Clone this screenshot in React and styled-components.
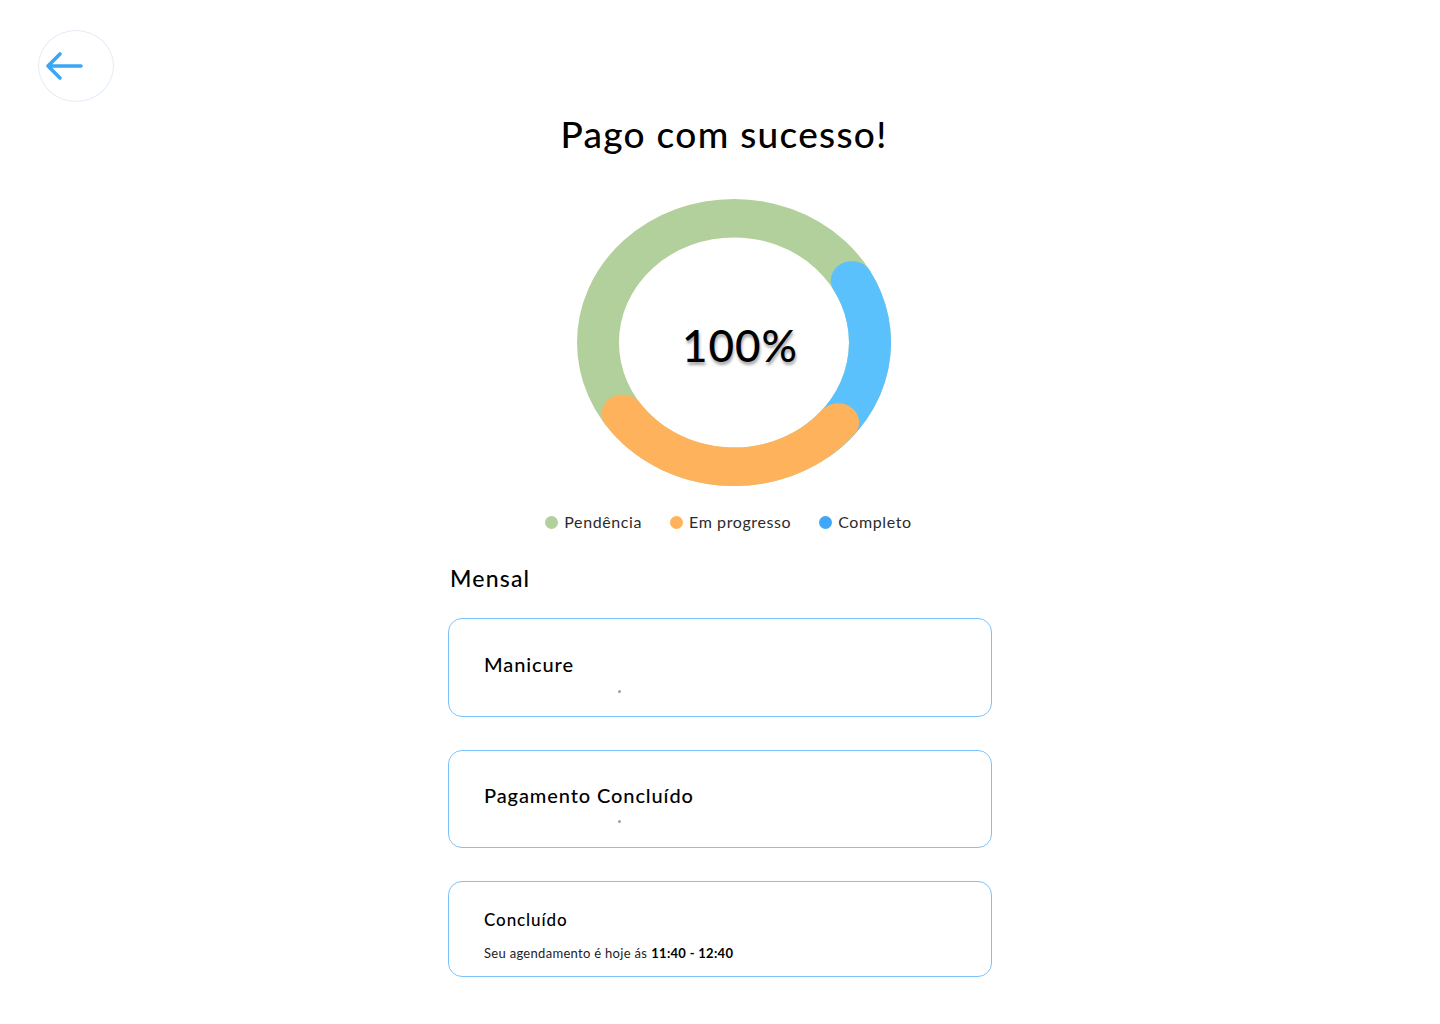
import React from "react";
import styled, { createGlobalStyle } from "styled-components";

const Global = createGlobalStyle`
  html, body { margin: 0; padding: 0; background: #ffffff; }
  body { font-family: Lato, "Open Sans", "Noto Sans", sans-serif; color: #000; }
`;

const Page = styled.div`
  width: 1440px;
  min-height: 1024px;
  box-sizing: border-box;
  padding: 30px 38px 40px;
  display: flex;
  flex-direction: column;
`;

const Header = styled.header`
  display: flex;
  align-items: center;
`;

const BackButton = styled.button`
  width: 76px;
  height: 72px;
  border-radius: 50%;
  border: 1px solid #e4ecf8;
  background: #fff;
  padding: 0 0 0 5px;
  display: flex;
  align-items: center;
  justify-content: flex-start;
  cursor: pointer;
`;

const Main = styled.main`
  width: 544px;
  margin: 10px auto 0;
  display: flex;
  flex-direction: column;
  align-items: center;
`;

const Title = styled.h1`
  margin: 0 0 0 8px;
  font-size: 37px;
  line-height: 44px;
  font-weight: 500;
  color: #000;
  letter-spacing: 1.3px;
`;

const DonutWrap = styled.div`
  position: relative;
  width: 314px;
  height: 287px;
  margin: 43px 0 0 28px;
`;

const Percent = styled.div`
  position: absolute;
  inset: 0;
  display: flex;
  align-items: center;
  justify-content: center;
  padding-left: 12px;
  padding-top: 4px;
  font-size: 44px;
  font-weight: 500;
  color: #000;
  letter-spacing: 1px;
  text-shadow: 1px 3px 3px rgba(0, 0, 0, 0.35);
`;

const Legend = styled.div`
  display: flex;
  align-items: center;
  gap: 28px;
  margin: 26px 0 0 17px;
`;

const LegendItem = styled.div`
  display: flex;
  align-items: center;
  gap: 6px;
  font-size: 16px;
  line-height: 20px;
  letter-spacing: 0.6px;
  color: #2b2b2b;
`;

const Dot = styled.span`
  width: 13px;
  height: 13px;
  border-radius: 50%;
  background: ${(p) => p.$color};
`;

const SectionTitle = styled.h2`
  align-self: stretch;
  margin: 32px 0 0 2px;
  font-size: 23px;
  line-height: 28px;
  font-weight: 500;
  letter-spacing: 1.2px;
  color: #000;
`;

const CardList = styled.div`
  align-self: stretch;
  display: flex;
  flex-direction: column;
  gap: 33px;
  margin-top: 26px;
`;

const Card = styled.div`
  box-sizing: border-box;
  height: ${(p) => p.$h}px;
  border: 1px solid #7cc3fb;
  border-radius: 14px;
  padding: ${(p) => p.$pt}px 35px 0;
  display: flex;
  flex-direction: column;
`;

const CardTitle = styled.div`
  font-size: ${(p) => p.$size}px;
  line-height: 24px;
  font-weight: 500;
  letter-spacing: ${(p) => p.$ls}px;
  color: #000;
`;

const CardSub = styled.div`
  margin-top: ${(p) => p.$mt}px;
  font-size: 13px;
  line-height: 16px;
  letter-spacing: 0.3px;
  color: #222;
  display: flex;
  align-items: center;
  height: 16px;
`;

const Speck = styled.span`
  width: 3px;
  height: 3px;
  border-radius: 50%;
  background: #a0a0a0;
  margin-left: 134px;
`;

const Strong = styled.b`
  font-weight: 700;
  margin-left: 4px;
  color: #000;
`;

function Donut() {
  const r = 136;
  const cx = 157;
  const cy = 157;
  const pt = (deg) => {
    const a = (deg * Math.PI) / 180;
    return [cx + r * Math.cos(a), cy + r * Math.sin(a)];
  };
  const arc = (from, to) => {
    const [x1, y1] = pt(from);
    const [x2, y2] = pt(to);
    const large = to - from > 180 ? 1 : 0;
    return `M ${x1} ${y1} A ${r} ${r} 0 ${large} 1 ${x2} ${y2}`;
  };
  return (
    <svg width="314" height="287" viewBox="0 0 314 314" preserveAspectRatio="none">
      <circle cx={cx} cy={cy} r={r} fill="none" stroke="#b2d09b" strokeWidth="42" />
      <path d={arc(-30, 52)} fill="none" stroke="#5ac1fd" strokeWidth="42" strokeLinecap="round" />
      <path d={arc(40, 145)} fill="none" stroke="#ffb25c" strokeWidth="42" strokeLinecap="round" />
    </svg>
  );
}

export default function App() {
  return (
    <>
      <Global />
      <Page>
        <Header>
          <BackButton aria-label="Voltar">
            <svg width="40" height="32" viewBox="0 0 40 32" fill="none">
              <path d="M37 16 H4 M16 4 L4 16 L16 28" stroke="#3aa6f5" strokeWidth="3.6" strokeLinecap="round" strokeLinejoin="round" />
            </svg>
          </BackButton>
        </Header>
        <Main>
          <Title>Pago com sucesso!</Title>
          <DonutWrap>
            <Donut />
            <Percent>100%</Percent>
          </DonutWrap>
          <Legend>
            <LegendItem><Dot $color="#b2d09b" />Pendência</LegendItem>
            <LegendItem><Dot $color="#ffb25c" />Em progresso</LegendItem>
            <LegendItem><Dot $color="#3ea7f7" />Completo</LegendItem>
          </Legend>
          <SectionTitle>Mensal</SectionTitle>
          <CardList>
            <Card $h={99} $pt={33}>
              <CardTitle $size={20} $ls={0.9}>Manicure</CardTitle>
              <CardSub $mt={7}><Speck /></CardSub>
            </Card>
            <Card $h={98} $pt={32}>
              <CardTitle $size={20} $ls={0.9}>Pagamento Concluído</CardTitle>
              <CardSub $mt={6}><Speck /></CardSub>
            </Card>
            <Card $h={96} $pt={26}>
              <CardTitle $size={17} $ls={0.9}>Concluído</CardTitle>
              <CardSub $mt={13}>Seu agendamento é hoje ás<Strong>11:40 - 12:40</Strong></CardSub>
            </Card>
          </CardList>
        </Main>
      </Page>
    </>
  );
}
